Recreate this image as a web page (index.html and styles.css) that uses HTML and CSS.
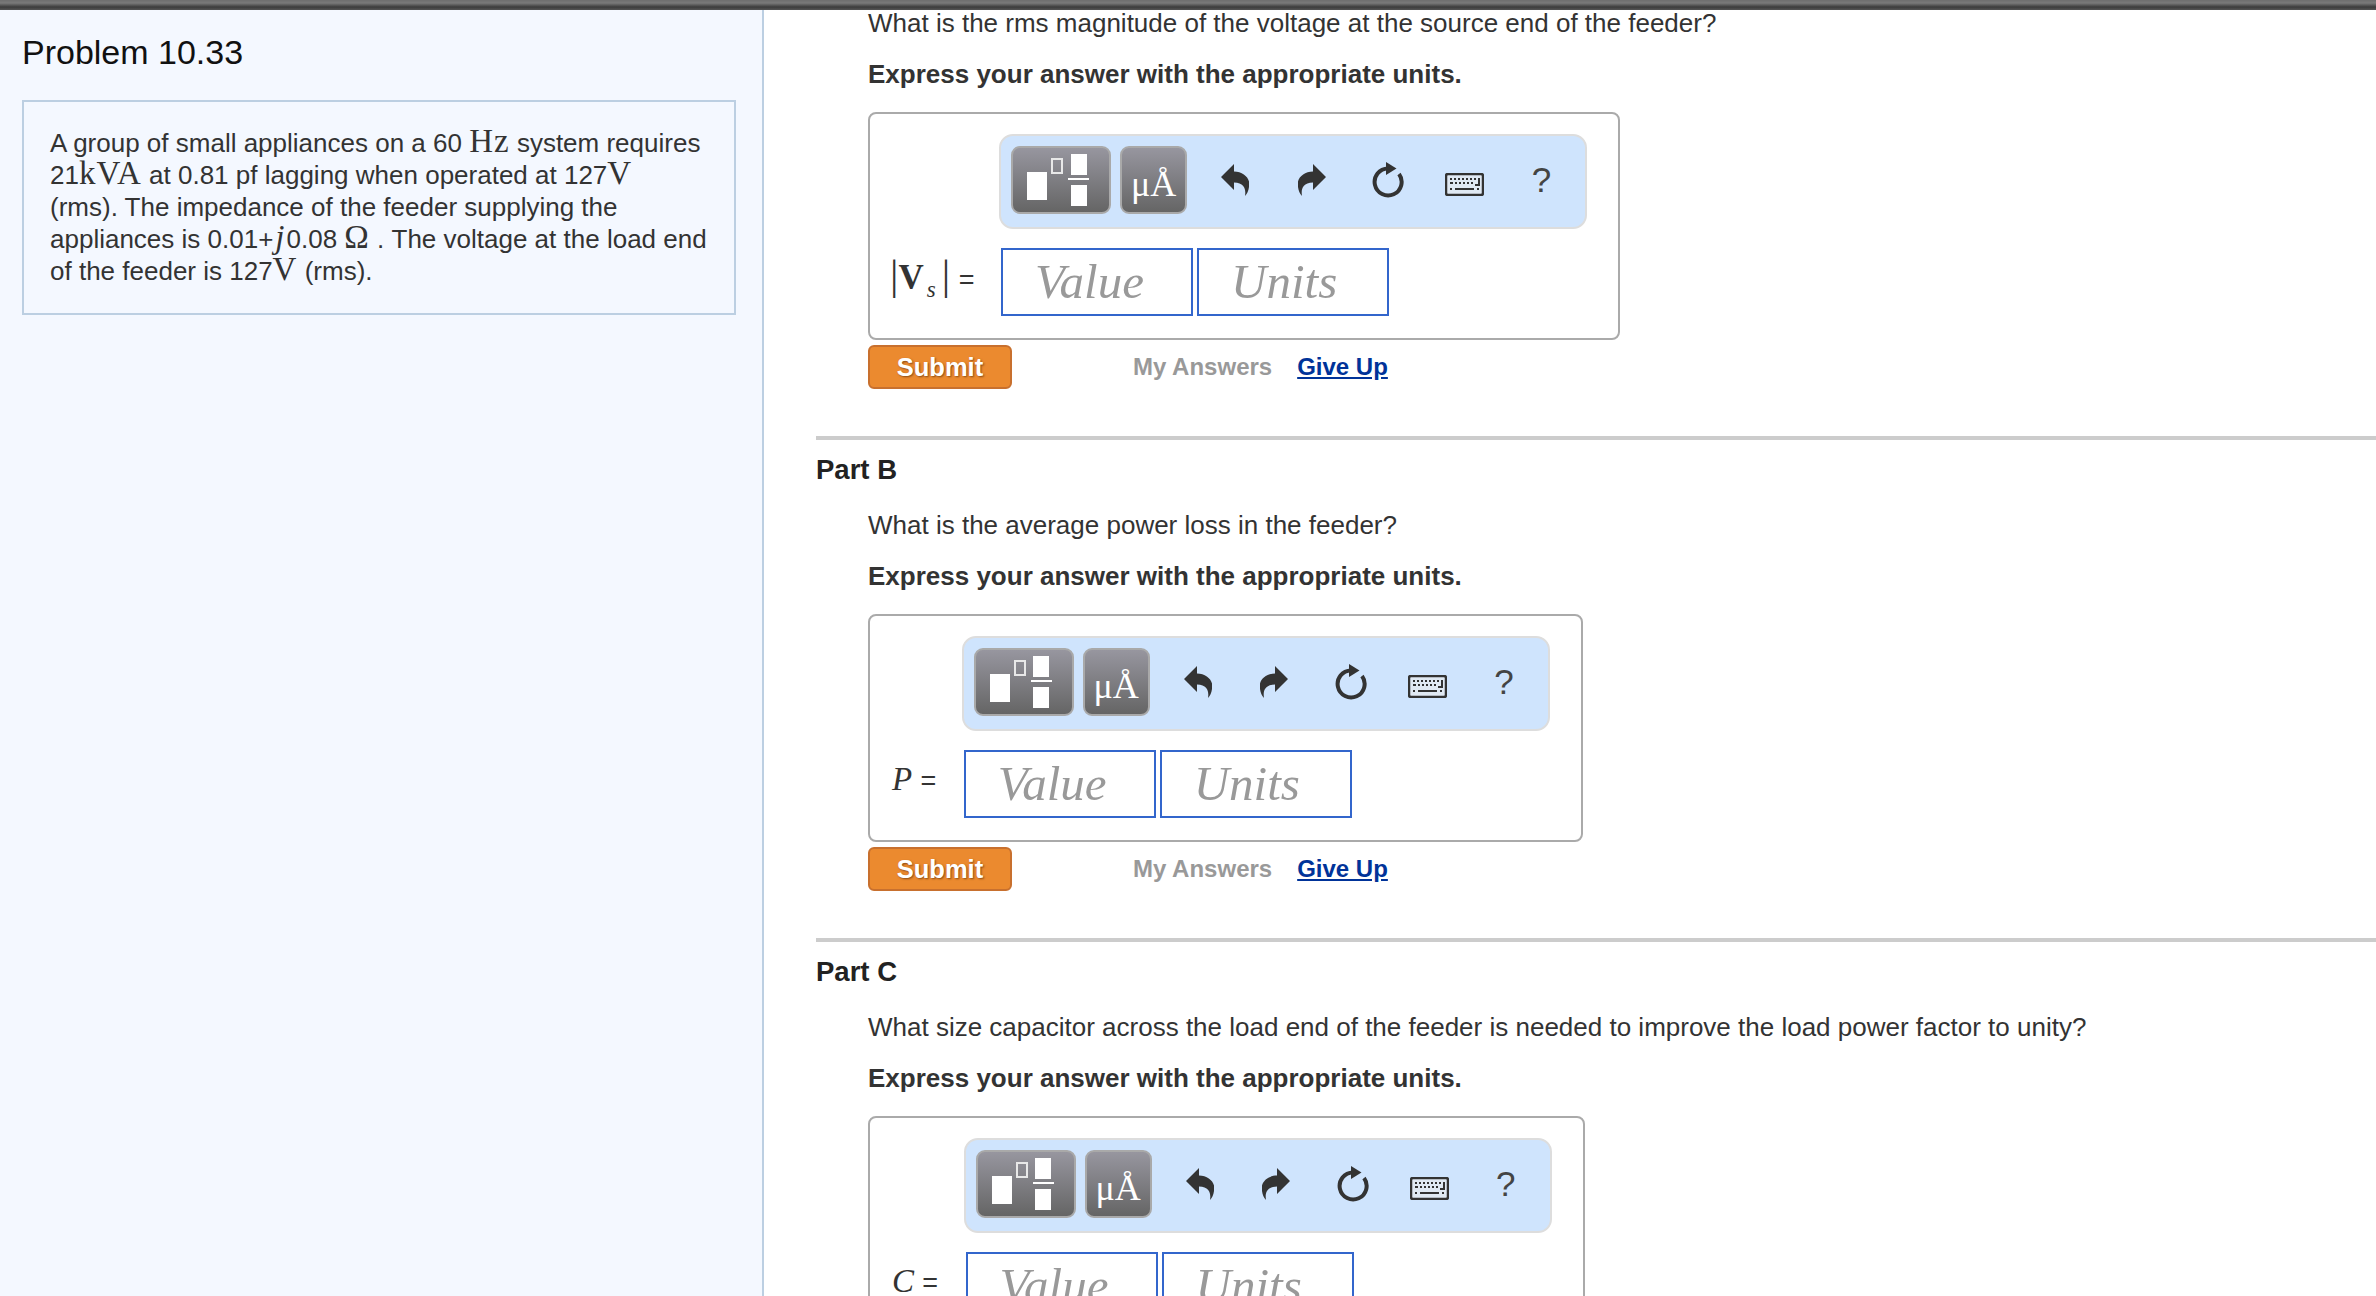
FILE: index.html
```html
<!DOCTYPE html>
<html lang="en">
<head>
    <meta charset="UTF-8">
    <title>Problem 10.33</title>
    <link rel="stylesheet" href="styles.css">
</head>
<body>
<svg class="svg-defs">
    <symbol id="icon-undo" viewBox="0 0 28 32">
        <path d="M0 13 L13 0 V7.5 C23 7.5 30 15 28 23 C27.5 27 26 30 24 32 C25 26 24 19 13 18.5 V26 Z"/>
    </symbol>
    <symbol id="icon-reload" viewBox="0 0 32 36">
        <path class="reload-ring" d="M16 6.5 A13.5 13.5 0 1 0 27 12"/>
        <path d="M14 0 L24.5 6.5 L14 13 Z"/>
    </symbol>
    <symbol id="icon-keyboard" viewBox="0 0 39 23">
        <rect class="key-frame" x="1" y="1" width="37" height="21" rx="2"/>
        <path d="M5 5h2v2H5zM9 5h2v2H9zM13 5h2v2h-2zM17 5h2v2h-2zM21 5h2v2h-2zM25 5h2v2h-2zM29 5h2v2h-2zM33 5h2v8h-5v-2h3zM5 9h3v2H5zM10 9h2v2h-2zM14 9h2v2h-2zM18 9h2v2h-2zM22 9h2v2h-2zM26 9h2v2h-2zM5 15h2v2H5zM10 15h19v2H10zM32 15h2v2h-2z"/>
    </symbol>
</svg>

<div class="top-bar"></div>
<div class="layout">
    <aside class="sidebar">
        <h1 class="problem-title">Problem 10.33</h1>
        <div class="problem-box">
            A group of small appliances on a 60 <span class="math">Hz</span> system requires
            21<span class="math">kVA</span> at 0.81 pf lagging when operated at 127<span class="math">V</span><br>
            (rms). The impedance of the feeder supplying the<br>
            appliances is 0.01+<span class="math math-j">j</span>0.08 <span class="math">Ω</span> . The voltage at the load end<br>
            of the feeder is 127<span class="math">V</span> (rms).
        </div>
    </aside>

    <main class="content">
        <section class="part">
            <p class="question">What is the rms magnitude of the voltage at the source end of the feeder?</p>
            <p class="instruction">Express your answer with the appropriate units.</p>
            <div class="answer-box">
                <div class="toolbar">
                    <div class="tool-btn tool-template">
                        <span class="tpl-base"></span>
                        <span class="tpl-exp"></span>
                        <span class="tpl-frac"><i></i><b></b><i></i></span>
                    </div>
                    <div class="tool-btn tool-units">μÅ</div>
                    <div class="tool-icon"><svg class="icon-arrow"><use href="#icon-undo"/></svg></div>
                    <div class="tool-icon"><svg class="icon-arrow flip"><use href="#icon-undo"/></svg></div>
                    <div class="tool-icon"><svg class="icon-reload"><use href="#icon-reload"/></svg></div>
                    <div class="tool-icon"><svg class="icon-keyboard"><use href="#icon-keyboard"/></svg></div>
                    <div class="tool-icon tool-help">?</div>
                </div>
                <div class="answer-label label-vector"><span class="pipe">|</span><b class="var-bold">V</b><i class="var-sub">s</i><span class="pipe pipe-end">|</span> <span class="equals">=</span></div>
                <div class="inputs">
                    <div class="input-field">Value</div>
                    <div class="input-field">Units</div>
                </div>
            </div>
            <div class="actions">
                <button class="submit-btn">Submit</button>
                <span class="my-answers">My Answers</span>
                <a class="give-up" href="#">Give Up</a>
            </div>
        </section>

        <section class="part part-titled">
            <h2 class="part-title">Part B</h2>
            <p class="question">What is the average power loss in the feeder?</p>
            <p class="instruction">Express your answer with the appropriate units.</p>
            <div class="answer-box">
                <div class="toolbar">
                    <div class="tool-btn tool-template">
                        <span class="tpl-base"></span>
                        <span class="tpl-exp"></span>
                        <span class="tpl-frac"><i></i><b></b><i></i></span>
                    </div>
                    <div class="tool-btn tool-units">μÅ</div>
                    <div class="tool-icon"><svg class="icon-arrow"><use href="#icon-undo"/></svg></div>
                    <div class="tool-icon"><svg class="icon-arrow flip"><use href="#icon-undo"/></svg></div>
                    <div class="tool-icon"><svg class="icon-reload"><use href="#icon-reload"/></svg></div>
                    <div class="tool-icon"><svg class="icon-keyboard"><use href="#icon-keyboard"/></svg></div>
                    <div class="tool-icon tool-help">?</div>
                </div>
                <div class="answer-label label-scalar"><i class="var">P</i> <span class="equals">=</span></div>
                <div class="inputs">
                    <div class="input-field">Value</div>
                    <div class="input-field">Units</div>
                </div>
            </div>
            <div class="actions">
                <button class="submit-btn">Submit</button>
                <span class="my-answers">My Answers</span>
                <a class="give-up" href="#">Give Up</a>
            </div>
        </section>

        <section class="part part-titled">
            <h2 class="part-title">Part C</h2>
            <p class="question">What size capacitor across the load end of the feeder is needed to improve the load power factor to unity?</p>
            <p class="instruction">Express your answer with the appropriate units.</p>
            <div class="answer-box">
                <div class="toolbar">
                    <div class="tool-btn tool-template">
                        <span class="tpl-base"></span>
                        <span class="tpl-exp"></span>
                        <span class="tpl-frac"><i></i><b></b><i></i></span>
                    </div>
                    <div class="tool-btn tool-units">μÅ</div>
                    <div class="tool-icon"><svg class="icon-arrow"><use href="#icon-undo"/></svg></div>
                    <div class="tool-icon"><svg class="icon-arrow flip"><use href="#icon-undo"/></svg></div>
                    <div class="tool-icon"><svg class="icon-reload"><use href="#icon-reload"/></svg></div>
                    <div class="tool-icon"><svg class="icon-keyboard"><use href="#icon-keyboard"/></svg></div>
                    <div class="tool-icon tool-help">?</div>
                </div>
                <div class="answer-label label-scalar"><i class="var">C</i> <span class="equals">=</span></div>
                <div class="inputs">
                    <div class="input-field">Value</div>
                    <div class="input-field">Units</div>
                </div>
            </div>
        </section>
    </main>
</div>
</body>
</html>
```

FILE: styles.css
```css
* {
    box-sizing: border-box;
}

html, body {
    height: 100%;
}

body {
    margin: 0;
    display: flex;
    flex-direction: column;
    overflow: hidden;
    background-color: #fff;
    color: #333;
    font-family: "Liberation Sans", Arial, sans-serif;
    font-size: 26px;
    line-height: 32px;
}

.svg-defs {
    display: none;
}

.top-bar {
    flex: 0 0 10px;
    background: linear-gradient(#6e6e6e, #7a7a7a 30%, #3c3c3c 70%, #555);
}

.layout {
    flex: 1;
    display: flex;
    min-height: 0;
}

/* left column */
.sidebar {
    flex: 0 0 764px;
    padding: 26px 26px 0 22px;
    background-color: #f4f8ff;
    border-right: 2px solid #bccfe2;
}

.problem-title {
    margin: 0;
    height: 32px;
    font-size: 34px;
    line-height: 32px;
    font-weight: normal;
    color: #111;
}

.problem-box {
    margin-top: 32px;
    padding: 25px 0 25px 26px;
    height: 215px;
    border: 2px solid #bccfe2;
}

.math {
    font-family: "Liberation Serif", "Times New Roman", serif;
    font-size: 33px;
    line-height: 0;
    letter-spacing: 1px;
}

.math-j {
    font-style: italic;
    margin: 0 1px 0 2px;
}

/* right column */
.content {
    flex: 1;
    min-width: 0;
    overflow: hidden;
    padding-left: 52px;
    margin-top: -3px;
}

.part {
    padding-left: 52px;
}

.part-titled {
    margin-top: 47px;
    padding-top: 14px;
    border-top: 4px solid #ccc;
    padding-left: 0;
}

.part-titled > .question,
.part-titled > .instruction,
.part-titled > .answer-box,
.part-titled > .actions {
    margin-left: 52px;
}

.part-title {
    margin: 0 0 23px;
    font-size: 27.5px;
    line-height: 32px;
    font-weight: bold;
    color: #222;
}

.question {
    margin: 0;
}

.instruction {
    margin: 19px 0 0;
    font-weight: bold;
}

.answer-box {
    display: inline-grid;
    grid-template-columns: auto 588px;
    margin-top: 22px;
    padding: 20px 31px 22px 0;
    border: 2px solid #aaa;
    border-radius: 8px;
    vertical-align: top;
}

.toolbar {
    grid-column: 2;
    display: flex;
    height: 95px;
    padding: 10px;
    margin-bottom: 19px;
    background-color: #cfe4fd;
    border: 2px solid #ddd;
    border-radius: 14px;
}

.tool-btn {
    position: relative;
    flex: 0 0 auto;
    height: 68px;
    border: 2px solid #a9a9a9;
    border-radius: 9px;
    background: linear-gradient(#97969f, #656565);
    color: #fff;
}

.tool-template {
    width: 100px;
    margin-right: 9px;
}

.tool-units {
    width: 67px;
    margin-right: 10px;
    text-align: center;
    font-family: "Liberation Serif", serif;
    font-size: 36px;
    line-height: 72px;
}

/* the pieces inside the template button */
.tpl-base {
    position: absolute;
    left: 14px;
    top: 24px;
    width: 20px;
    height: 28px;
    background-color: #fff;
}

.tpl-exp {
    position: absolute;
    left: 38px;
    top: 10px;
    width: 12px;
    height: 16px;
    border: 2px solid #e8e8e8;
}

.tpl-frac {
    position: absolute;
    left: 55px;
    top: 6px;
    width: 21px;
    display: flex;
    flex-direction: column;
    align-items: center;
}

.tpl-frac i {
    display: block;
    width: 16px;
    height: 21px;
    background-color: #fff;
}

.tpl-frac b {
    display: block;
    width: 21px;
    height: 2px;
    margin: 3px 0 5px;
    background-color: #fff;
}

.tool-icon {
    flex: 0 0 76.5px;
    height: 68px;
    display: flex;
    align-items: center;
    justify-content: center;
    fill: #333;
}

.icon-arrow {
    width: 28px;
    height: 32px;
}

.flip {
    transform: scaleX(-1);
}

.icon-reload {
    width: 32px;
    height: 36px;
}

.reload-ring {
    fill: none;
    stroke: #333;
    stroke-width: 4;
}

.icon-keyboard {
    width: 39px;
    height: 23px;
    margin-top: 9px;
}

.key-frame {
    fill: #e0e9f3;
    stroke: #333;
    stroke-width: 2.5;
}

.tool-help {
    font-size: 35px;
    color: #444;
}

.answer-label {
    grid-row: 2;
    grid-column: 1;
    align-self: center;
    white-space: nowrap;
    font-family: "Liberation Serif", serif;
    font-size: 33px;
}

.label-vector {
    padding: 0 24.5px 0 20px;
    font-size: 35px;
}

.label-scalar {
    padding: 0 25.5px 0 22px;
    margin-top: -8px;
}

.pipe {
    font-size: 42px;
    font-weight: normal;
}

.pipe-end {
    margin-left: 6px;
}

.var-bold {
    font-weight: bold;
}

.var-sub {
    font-size: 23px;
    vertical-align: -8px;
    margin-left: 3px;
}

.equals {
    font-family: "Liberation Sans", sans-serif;
    font-size: 27px;
}

.inputs {
    grid-row: 2;
    grid-column: 2;
    display: flex;
    gap: 4px;
    padding-left: 2px;
}

.input-field {
    width: 192px;
    height: 68px;
    padding-left: 32px;
    border: 2px solid #3366cc;
    font-family: "Liberation Serif", serif;
    font-style: italic;
    font-size: 49px;
    line-height: 64px;
    color: #999;
}

.actions {
    display: flex;
    align-items: center;
    margin-top: 5px;
    font-size: 24px;
    font-weight: bold;
}

.submit-btn {
    width: 144px;
    height: 44px;
    padding: 0;
    margin-right: 121px;
    border: 2px solid #c8702e;
    border-radius: 6px;
    background-color: #eb8a2f;
    color: #fff;
    font-family: inherit;
    font-size: 25.5px;
    font-weight: bold;
    text-shadow: 1px 1px 2px #8a4a14;
}

.my-answers {
    color: #999;
    margin-right: 25px;
}

.give-up {
    color: #003399;
}
```
